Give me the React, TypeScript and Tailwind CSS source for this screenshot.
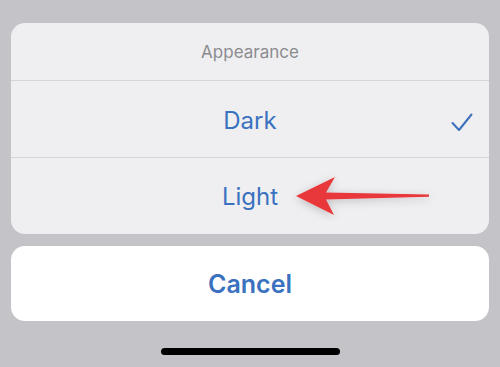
export default function App() {
  return (
    <div className="w-[500px] h-[367px] bg-[#c4c3c8] px-[11px] pt-[23px] font-['Inter','Liberation_Sans',sans-serif] overflow-hidden">
      <div className="bg-[#efeff1] rounded-[14px] overflow-hidden">
        <div className="h-[58px] flex items-center justify-center text-[17px] text-[#8b8b8f] border-b border-[#d5d5d8] pt-[3px]">
          Appearance
        </div>
        <div className="relative h-[77px] flex items-center justify-center border-b border-[#d5d5d8] pt-[3px]">
          <span className="text-[24px] text-[#3a72c0]">Dark</span>
          <svg className="absolute left-[440px] top-[32px]" width="22" height="19" viewBox="0 0 22 19" fill="none">
            <path d="M1.5 10 L8 17 L20.5 1.5" stroke="#3d6fba" strokeWidth="2" strokeLinecap="round" strokeLinejoin="round" />
          </svg>
        </div>
        <div className="relative h-[76px] flex items-center justify-center pt-[2px]">
          <span className="text-[24px] text-[#3a72c0]">Light</span>
          {/* annotation arrow */}
          <svg className="absolute left-[270px] top-[13px]" width="160" height="50" viewBox="0 0 160 50">
            <defs>
              <filter id="sh" x="-20%" y="-50%" width="140%" height="200%">
                <feDropShadow dx="0" dy="2" stdDeviation="4" floodColor="#000" floodOpacity="0.22" />
              </filter>
            </defs>
            <path
              d="M15 25 L54 6 L45 21.5 L148 23.6 L148 25.8 L45 28.5 L53 44 Z"
              fill="#e8383b"
              filter="url(#sh)"
            />
          </svg>
        </div>
      </div>
      <div className="mt-[12px] h-[75px] bg-white rounded-[14px] flex items-center justify-center pt-[2px]">
        <span className="text-[25px] font-semibold text-[#3a72c0]">Cancel</span>
      </div>
      <div className="mt-[27px] mx-auto w-[179px] h-[7px] rounded-full bg-black" />
    </div>
  )
}
